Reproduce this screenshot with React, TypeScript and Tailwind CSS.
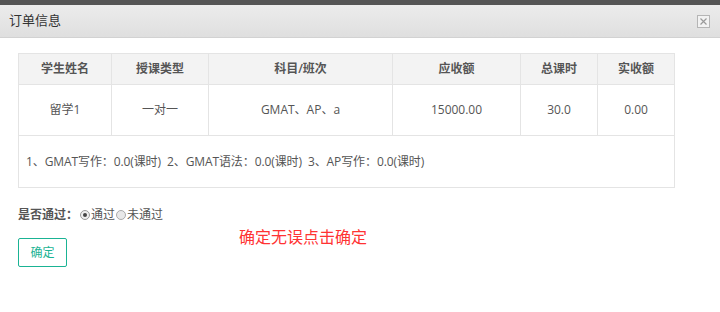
import React from "react";

const font = { fontFamily: '"Open Sans", "Noto Sans CJK SC", sans-serif' };

export default function App() {
  const cols = ["w-[93px]", "w-[97px]", "w-[184px]", "w-[128px]", "w-[77px]", "w-[77px]"];
  const heads = ["学生姓名", "授课类型", "科目/班次", "应收额", "总课时", "实收额"];
  const vals = ["留学1", "一对一", "GMAT、AP、a", "15000.00", "30.0", "0.00"];
  return (
    <div lang="zh-CN" className="w-[720px] h-[312px] bg-white text-[#555] text-[12px] overflow-hidden" style={font}>
      <div className="h-[5px] bg-[#555555]" />
      <div className="h-[33px] flex items-center justify-between pl-[9px] pr-[10px] bg-gradient-to-b from-[#ececec] to-[#dfdfdf] border-b border-[#d2d2d2]">
        <span className="text-[13px] text-[#333]">订单信息</span>
        <div className="w-[13px] h-[13px] border border-[#b5b5b5] bg-[#f2f2f2] flex items-center justify-center">
          <svg width="9" height="9" viewBox="0 0 9 9">
            <path d="M1.5 1.5 L7.5 7.5 M7.5 1.5 L1.5 7.5" stroke="#9a9a9a" strokeWidth="1.2" />
          </svg>
        </div>
      </div>
      <div className="pl-[18px] pt-[15px]">
        <table className="border-collapse w-[657px] text-[#555]">
          <thead>
            <tr className="h-[31px] bg-[#f3f3f3]">
              {heads.map((h, i) => (
                <th key={i} className={`${cols[i]} border border-[#e4e4e4] font-semibold text-[12px] text-[#555]`}>{h}</th>
              ))}
            </tr>
          </thead>
          <tbody>
            <tr className="h-[51px]">
              {vals.map((v, i) => (
                <td key={i} className="border border-[#e4e4e4] text-center text-[12px]">{v}</td>
              ))}
            </tr>
            <tr className="h-[52px]">
              <td colSpan={6} className="border border-[#e4e4e4] pl-[7px] text-[12px] tracking-[-0.1px]">
                1、GMAT写作：0.0(课时)&nbsp; 2、GMAT语法：0.0(课时)&nbsp; 3、AP写作：0.0(课时)
              </td>
            </tr>
          </tbody>
        </table>
        <div className="flex items-start mt-[18px]">
          <div>
            <div className="flex items-center h-[17px] text-[12px]">
              <span className="font-semibold text-[#555]">是否通过：</span>
              <span className="ml-[2px] w-[10px] h-[10px] rounded-full border border-[#999] bg-[#eee] flex items-center justify-center mr-[1px]">
                <span className="w-[4px] h-[4px] rounded-full bg-[#444]" />
              </span>
              <span>通过</span>
              <span className="w-[10px] h-[10px] rounded-full border border-[#aaa] bg-[#e8e8e8] ml-[1px] mr-[1px]" />
              <span>未通过</span>
            </div>
            <button className="mt-[15px] w-[49px] h-[29px] border border-[#1ab394] rounded-[2px] text-[#1ab394] text-[12px] bg-white">确定</button>
          </div>
          <div className="ml-[76px] mt-[21px] text-[16px] text-[#ff3333] leading-[20px]">确定无误点击确定</div>
        </div>
      </div>
    </div>
  );
}
